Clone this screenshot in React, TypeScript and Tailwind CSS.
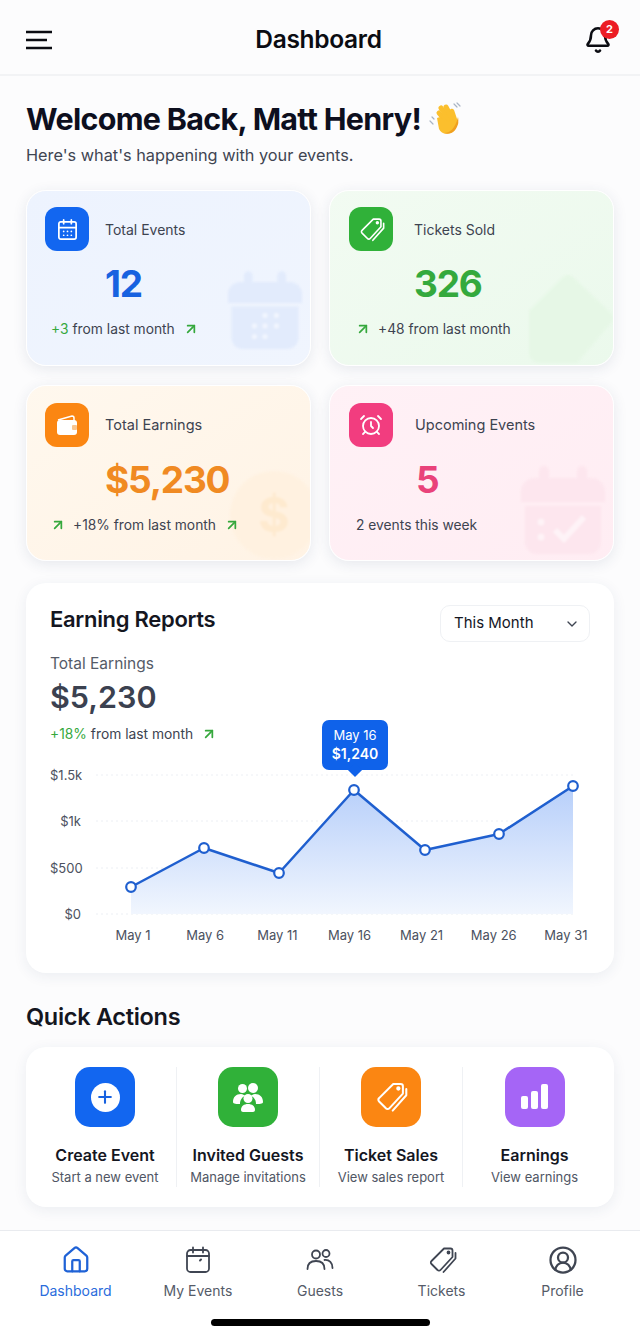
import type { ReactNode } from "react"
import { AlarmClock, ArrowUpRight, Bell, CalendarDays, ChevronDown, CircleUserRound, House, Plus } from "lucide-react"

const Wave = () => (
  <svg width="36" height="36" viewBox="0 0 36 36" fill="none" className="ml-[6px] shrink-0">
    <path d="M3 20l3 3M5 16l2 2M27 3l3 3M30 2l3 3" stroke="#a9b4c4" strokeWidth="1.2" strokeLinecap="round" />
    <g stroke="#fbbf2d" strokeLinecap="round">
      <path d="M12 12l9 11" strokeWidth="5" />
      <path d="M14 7l10 14" strokeWidth="5" />
      <path d="M19 6l8 15" strokeWidth="5" />
      <path d="M25 10l4 12" strokeWidth="4.5" />
    </g>
    <path d="M10 17c3-2 5 0 6 2l3 2 10-3c2 6 0 12-5 14-6 2-10 0-12-4z" fill="#fbbf2d" />
    <path d="M31 16c1 5 0 11-5 15-3 2-6 2-9 1 6 0 11-4 14-16z" fill="#f0a020" />
  </svg>
)

const CalendarMark = ({ color, check }: { color: string; check?: boolean }) => (
  <svg viewBox="0 0 84 90" className="w-full h-full" fill={color}>
    <rect x="18" y="0" width="10" height="22" rx="5" />
    <rect x="56" y="0" width="10" height="22" rx="5" />
    <path d="M0 26a14 14 0 0 1 14-14h56a14 14 0 0 1 14 14v10H0z" />
    <path d="M4 40h76v36a12 12 0 0 1-12 12H16A12 12 0 0 1 4 76z" />
    {check ? (
      <g>
        <path d="M34 64l9 9 20-22" stroke="#fff" strokeOpacity=".5" strokeWidth="6" fill="none" />
        <circle cx="20" cy="56" r="3.5" fill="#fff" fillOpacity=".5" />
        <circle cx="20" cy="71" r="3.5" fill="#fff" fillOpacity=".5" />
      </g>
    ) : (
      <g fill="#fff" fillOpacity=".5">
        <circle cx="42" cy="50" r="3" />
        <circle cx="55" cy="50" r="3" />
        <circle cx="30" cy="62" r="3" />
        <circle cx="42" cy="62" r="3" />
        <circle cx="55" cy="62" r="3" />
        <circle cx="30" cy="74" r="3" />
        <circle cx="42" cy="74" r="3" />
      </g>
    )}
  </svg>
)

const TicketMark = () => (
  <svg viewBox="0 0 90 96" className="w-full h-full" fill="#e6f7e6">
    <path d="M4 40L38 6a8 8 0 0 1 10 0l38 36a8 8 0 0 1 0 10L52 92H14a10 10 0 0 1-10-10z" />
  </svg>
)

const CoinMark = () => (
  <div className="w-full h-full rounded-full bg-[#fff1e0] flex items-center justify-center text-[#feeacf] text-[48px] font-bold">
    $
  </div>
)

const WalletIcon = () => (
  <svg width="24" height="22" viewBox="0 0 24 22" fill="none">
    <path d="M3 6l14-4a2 2 0 0 1 2 2v3" stroke="#fff" strokeWidth="1.5" />
    <rect x="2" y="6" width="20" height="15" rx="3" fill="#fff" />
    <rect x="17" y="11" width="5" height="5" rx="1" fill="#f8c58f" />
  </svg>
)

const GroupIcon = () => (
  <svg width="32" height="30" viewBox="0 0 32 30" fill="#fff">
    <circle cx="10.5" cy="6.5" r="4.5" />
    <circle cx="21" cy="6" r="5" />
    <path d="M1 20c0-5 3-8 8-8 2 0 3 1 4 2-3 1-5 4-5 8-3 0-7 0-7-2z" />
    <path d="M31 20c0-5-3-8-8-8-2 0-3 1-4 2 3 1 5 4 5 8 3 0 7 0 7-2z" />
    <circle cx="16" cy="16.5" r="4.5" />
    <path d="M9 28c0-4 3-6 7-6s7 2 7 6c0 1-1 2-2 2H11c-1 0-2-1-2-2z" />
  </svg>
)

// tag with its tip at the top right and a second edge behind it
const TagPair = ({ size, width = 1.8, single }: { size: number; width?: number; single?: boolean }) => (
  <svg width={size} height={size} viewBox="0 0 30 30" fill="none" stroke="currentColor" strokeWidth={width} strokeLinecap="round" strokeLinejoin="round">
    <path d="M17 3.5h6.5a2 2 0 0 1 2 2V12L13.5 25a2 2 0 0 1-3 0l-6-6a2 2 0 0 1 0-3z" />
    <circle cx="21.5" cy="7.5" r="1" />
    {!single && <path d="M28.5 8v5.5L16.5 27" />}
  </svg>
)

const NavCalendar = () => (
  <svg width="30" height="30" viewBox="0 0 30 30" fill="none" stroke="currentColor" strokeWidth="1.8" strokeLinecap="round">
    <rect x="4" y="5" width="22" height="22" rx="3.5" />
    <path d="M10 2.5v5M20 2.5v5M4 11h22" />
    <path d="M17 15.5l1-1" strokeWidth="2" />
  </svg>
)

const NavGuests = () => (
  <svg width="30" height="30" viewBox="0 0 30 30" fill="none" stroke="currentColor" strokeWidth="1.8" strokeLinecap="round">
    <circle cx="11" cy="9.5" r="4" />
    <circle cx="21" cy="8.5" r="3.5" />
    <path d="M2.5 24c0-5 3-8 8.5-8s8.5 3 8.5 8" />
    <path d="M19.5 15c5-.5 8 3 8 8" />
  </svg>
)

const Delta = ({ before, accent, text, after }: { before?: boolean; accent?: string; text: string; after?: boolean }) => (
  <div className="flex items-center text-[13.8px] leading-5 text-[#3d4350]">
    {before && <ArrowUpRight size={16} strokeWidth={2.6} className="text-[#35a83c] mr-[7px]" />}
    {accent && <span className="text-[#35a83c] mr-1">{accent}</span>}
    <span>{text}</span>
    {after && <ArrowUpRight size={16} strokeWidth={2.6} className="text-[#35a83c] ml-[8px]" />}
  </div>
)

type StatProps = {
  card: string
  tile: string
  icon: ReactNode
  title: string
  value: string
  valueColor: string
  delta: ReactNode
  mark: ReactNode
  markBox: string
  pad: string
  titleGap: string
  valueIndent: string
  deltaIndent: string
}

const StatCard = ({ card, tile, icon, title, value, valueColor, delta, mark, markBox, pad, titleGap, valueIndent, deltaIndent }: StatProps) => (
  <div className={`relative h-[176px] rounded-[20px] border border-white overflow-hidden shadow-[0_3px_14px_rgba(40,60,100,0.10)] ${card} ${pad}`}>
    <div className={`absolute blur-[1px] ${markBox}`}>{mark}</div>
    <div className="relative flex items-center">
      <div className={`w-[44px] h-[44px] rounded-[12px] flex items-center justify-center text-white ${tile}`}>{icon}</div>
      <div className={`text-[#3d4350] ${titleGap}`}>{title}</div>
    </div>
    <div className={`relative mt-[11px] text-[37px] leading-[44px] font-bold tracking-[-1.2px] ${valueColor} ${valueIndent}`}>{value}</div>
    <div className={`relative mt-[13px] ${deltaIndent}`}>{delta}</div>
  </div>
)

const points: [number, number][] = [
  [131, 887],
  [204, 848],
  [279, 873],
  [354, 790],
  [425, 850],
  [499, 834],
  [573, 786],
]

const line = points.map((p) => p.join(",")).join(" ")
const area = `131,914 ${line} 573,914`

const EarningsChart = () => (
  <div className="relative mt-[23px]">
    <div className="absolute left-[272px] top-[-47px] w-[66px] h-[50px] rounded-[7px] bg-[#0f62ea] text-white text-center pt-[6px]">
      <div className="text-[13px] leading-[18px]">May 16</div>
      <div className="text-[14px] leading-[19px] font-semibold">$1,240</div>
      <div className="absolute left-[28px] bottom-[-5px] w-[10px] h-[10px] rotate-45 bg-[#0f62ea]" />
    </div>
    <div className="flex">
      <div className="w-[31px] h-[155px] flex flex-col justify-between text-right text-[13px] leading-4 text-[#4b5160]">
        <div>$1.5k</div>
        <div>$1k</div>
        <div>$500</div>
        <div>$0</div>
      </div>
      <svg width="509" height="155" viewBox="81 767 509 155" className="overflow-visible">
        <defs>
          <linearGradient id="fill" x1="0" y1="0" x2="0" y2="1">
            <stop offset="0" stopColor="#b7cffa" />
            <stop offset="1" stopColor="#f1f6fe" />
          </linearGradient>
        </defs>
        {[775, 821, 868, 914].map((y) => (
          <line key={y} x1="96" x2="575" y1={y} y2={y} stroke="#eceff4" strokeDasharray="2 3" />
        ))}
        <polygon points={area} fill="url(#fill)" />
        <polyline points={line} fill="none" stroke="#1f5fcf" strokeWidth="2.5" strokeLinejoin="round" />
        {points.map(([x, y]) => (
          <circle key={x} cx={x} cy={y} r="4.8" fill="#fff" stroke="#1f5fcf" strokeWidth="2.2" />
        ))}
      </svg>
    </div>
    <div className="grid grid-cols-7 ml-[47px] w-[505px] mt-[4px] text-center text-[13px] leading-[18px] text-[#4b5160]">
      {["May 1", "May 6", "May 11", "May 16", "May 21", "May 26", "May 31"].map((d) => (
        <div key={d}>{d}</div>
      ))}
    </div>
  </div>
)

const QuickAction = ({ tile, icon, title, sub, last }: { tile: string; icon: ReactNode; title: string; sub: string; last?: boolean }) => (
  <div className={`flex flex-col items-center h-[120px] ${last ? "" : "border-r border-[#eff1f4]"}`}>
    <div className={`w-[60px] h-[60px] rounded-[15px] flex items-center justify-center text-white ${tile}`}>{icon}</div>
    <div className="mt-[17px] text-[16px] leading-[22px] font-semibold text-[#14161f]">{title}</div>
    <div className="mt-[2px] text-[13px] leading-[18px] text-[#505664] whitespace-nowrap">{sub}</div>
  </div>
)

const NavItem = ({ icon, label, active }: { icon: ReactNode; label: string; active?: boolean }) => (
  <div className={`flex flex-col items-center ${active ? "text-[#1f62d6]" : "text-[#3f4552]"}`}>
    {icon}
    <div className={`mt-[6px] text-[14px] leading-5 ${active ? "text-[#2a6cdc]" : "text-[#555b68]"}`}>{label}</div>
  </div>
)

export default function App() {
  return (
    <div className="w-[640px] h-[1336px] flex flex-col overflow-hidden bg-[#fcfcfd] font-['Inter',sans-serif]">
      <header className="h-[76px] shrink-0 border-b-2 border-[#f2f3f5] px-[26px] pt-[5px] flex items-center justify-between">
        <svg width="27" height="20" viewBox="0 0 27 20" fill="none" stroke="#0b0c12" strokeWidth="2.6">
          <path d="M0 2h26M0 10h21M0 18h26" />
        </svg>
        <div className="text-[24.5px] font-semibold text-[#0b0c12] tracking-[-0.3px]">Dashboard</div>
        <div className="relative w-[28px] h-[28px] mr-[2px]">
          <Bell size={28} strokeWidth={2.2} className="text-[#0b0c12]" />
          <div className="absolute top-[-6px] left-[16px] w-[19px] h-[19px] rounded-full bg-[#ec1c24] text-white text-[11px] font-bold flex items-center justify-center">2</div>
        </div>
      </header>

      <main className="flex-1 px-[26px] pt-[23px]">
        <div className="flex items-center">
          <h1 className="text-[30.5px] leading-[40px] font-bold tracking-[-0.7px] text-[#0d0f1e]">Welcome Back, Matt Henry!</h1>
          <Wave />
        </div>
        <p className="mt-[4px] text-[16.3px] leading-6 text-[#3f4552]">Here's what's happening with your events.</p>

        <div className="mt-[23px] grid grid-cols-[285px_285px] gap-x-[18px] gap-y-[19px]">
          <StatCard
            card="bg-gradient-to-br from-[#edf3fe] to-[#f0f5fe]"
            tile="bg-[#1266f0]"
            icon={<CalendarDays size={23} strokeWidth={1.8} />}
            title="Total Events"
            value="12"
            valueColor="text-[#1862e0]"
            delta={<Delta accent="+3" text="from last month" after />}
            mark={<CalendarMark color="#e2ebfc" />}
            markBox="left-[201px] top-[75px] w-[74px] h-[90px]"
            pad="pl-[18px] pt-[16px]"
            titleGap="ml-[16px] text-[14px]"
            valueIndent="ml-[60px]"
            deltaIndent="ml-[6px]"
          />
          <StatCard
            card="bg-gradient-to-br from-[#f2fbf2] to-[#ebf9ec]"
            tile="bg-[#30b139]"
            icon={<TagPair size={27} />}
            title="Tickets Sold"
            value="326"
            valueColor="text-[#34a93d]"
            delta={<Delta before text="+48 from last month" />}
            mark={<TicketMark />}
            markBox="left-[195px] top-[80px] w-[90px] h-[96px]"
            pad="pl-[19px] pt-[16px]"
            titleGap="ml-[21px] text-[14px]"
            valueIndent="ml-[65px]"
            deltaIndent="ml-[6px]"
          />
          <StatCard
            card="bg-gradient-to-br from-[#fff8ee] to-[#fff3e5]"
            tile="bg-[#fb8612]"
            icon={<WalletIcon />}
            title="Total Earnings"
            value="$5,230"
            valueColor="text-[#f08a22]"
            delta={<Delta before text="+18% from last month" after />}
            mark={<CoinMark />}
            markBox="left-[203px] top-[85px] w-[88px] h-[88px]"
            pad="pl-[18px] pt-[17px]"
            titleGap="ml-[16px] text-[14.5px]"
            valueIndent="ml-[60px]"
            deltaIndent="ml-[5px]"
          />
          <StatCard
            card="bg-gradient-to-br from-[#fff1f6] to-[#ffedf3]"
            tile="bg-[#f23d7f]"
            icon={<AlarmClock size={24} strokeWidth={1.8} />}
            title="Upcoming Events"
            value="5"
            valueColor="text-[#e9427a]"
            delta={<Delta text="2 events this week" />}
            mark={<CalendarMark color="#fde6ee" check />}
            markBox="left-[191px] top-[80px] w-[84px] h-[90px]"
            pad="pl-[19px] pt-[17px]"
            titleGap="ml-[22px] text-[14.5px]"
            valueIndent="ml-[67px]"
            deltaIndent="ml-[7px]"
          />
        </div>

        <section className="mt-[22px] h-[390px] rounded-[20px] bg-white shadow-[0_3px_14px_rgba(40,60,100,0.08)] px-[24px] pt-[22px]">
          <div className="flex justify-between items-start">
            <h2 className="text-[22px] leading-[28px] font-semibold tracking-[-0.3px] text-[#14161f]">Earning Reports</h2>
            <div className="w-[150px] h-[37px] rounded-[10px] border border-[#eff1f4] flex items-center justify-between pl-[13px] pr-[9px] text-[15px] text-[#14161f]">
              This Month
              <ChevronDown size={16} strokeWidth={2} className="text-[#3f4552]" />
            </div>
          </div>
          <div className="mt-[11px] text-[15.5px] leading-[22px] text-[#555b68]">Total Earnings</div>
          <div className="mt-[2px] text-[30.5px] leading-[40px] font-semibold text-[#3b4150]">$5,230</div>
          <div className="mt-[7px]">
            <Delta accent="+18%" text="from last month" after />
          </div>
          <EarningsChart />
        </section>

        <h2 className="mt-[28px] text-[23.5px] leading-[32px] font-semibold tracking-[-0.3px] text-[#14161f]">Quick Actions</h2>

        <section className="mt-[14px] h-[160px] rounded-[20px] bg-white shadow-[0_3px_14px_rgba(40,60,100,0.08)] px-[8px] pt-[20px] grid grid-cols-4">
          <QuickAction
            tile="bg-[#1266f0]"
            icon={
              <div className="w-[29px] h-[29px] rounded-full bg-white flex items-center justify-center text-[#1862e0]">
                <Plus size={20} strokeWidth={2.5} />
              </div>
            }
            title="Create Event"
            sub="Start a new event"
          />
          <QuickAction tile="bg-[#30b139]" icon={<GroupIcon />} title="Invited Guests" sub="Manage invitations" />
          <QuickAction tile="bg-[#fb8612]" icon={<TagPair size={34} />} title="Ticket Sales" sub="View sales report" />
          <QuickAction
            tile="bg-[#a565f6]"
            icon={
              <svg width="28" height="26" viewBox="0 0 28 26" fill="#fff">
                <rect x="0" y="12" width="7" height="13" rx="2" />
                <rect x="10" y="7" width="7" height="18" rx="2" />
                <rect x="20" y="0" width="7" height="25" rx="2" />
              </svg>
            }
            title="Earnings"
            sub="View earnings"
            last
          />
        </section>
      </main>

      <nav className="h-[106px] shrink-0 border-t border-[#e9ebef] bg-white">
        <div className="grid grid-cols-[123px_122px_122px_121px_121px] px-[14px] pt-[14px]">
          <NavItem active icon={<House size={30} strokeWidth={1.8} />} label="Dashboard" />
          <NavItem icon={<NavCalendar />} label="My Events" />
          <NavItem icon={<NavGuests />} label="Guests" />
          <NavItem icon={<TagPair size={30} />} label="Tickets" />
          <NavItem icon={<CircleUserRound size={30} strokeWidth={1.8} />} label="Profile" />
        </div>
        <div className="mx-auto mt-[18px] w-[219px] h-[7px] rounded-full bg-black" />
      </nav>
    </div>
  )
}
